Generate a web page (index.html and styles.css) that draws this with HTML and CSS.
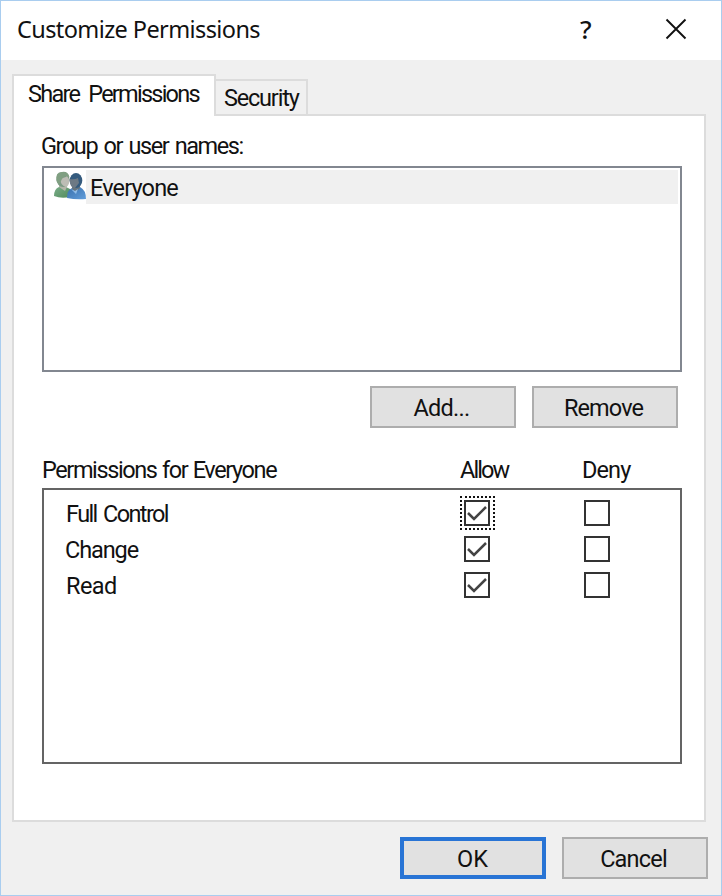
FILE: index.html
```html
<!DOCTYPE html>
<html lang="en">
<head>
<meta charset="utf-8">
<title>Customize Permissions</title>
<link rel="stylesheet" href="styles.css">
</head>
<body>
<div class="dialog">
  <header class="titlebar">
    <h1 class="title">Customize Permissions</h1>
    <span class="help">?</span>
    <svg class="close" width="22" height="22" viewBox="0 0 22 22"><path d="M1.5 1.5 20.5 20.5M20.5 1.5 1.5 20.5" fill="none" stroke="#111" stroke-width="1.9"/></svg>
  </header>
  <main class="body">
    <nav class="tabs">
      <div class="tab active"><span class="t-share">Share Permissions</span></div>
      <div class="tab"><span class="t-sec">Security</span></div>
    </nav>
    <section class="panel">
      <div class="label group-label"><span class="t-group">Group or user names:</span></div>
      <div class="users">
        <div class="user">
          <svg class="people" width="32" height="30" viewBox="0 0 32 30">
            <defs>
              <linearGradient id="g" x1="0" y1="0" x2="1" y2="1"><stop offset="0" stop-color="#7bae8b"/><stop offset="1" stop-color="#538c5c"/></linearGradient>
              <linearGradient id="b" x1="0" y1="0" x2="1" y2="1"><stop offset="0" stop-color="#386fac"/><stop offset="1" stop-color="#629edb"/></linearGradient>
            </defs>
            <path d="M0 25Q0 18 5 16L10 15 16 18V26Q7 28 0 25Z" fill="url(#g)"/>
            <path d="M5 11h8v5l-2 4-6-4Z" fill="#b3b5a8"/>
            <ellipse cx="9" cy="8.5" rx="6.5" ry="7.5" fill="#7c9984"/>
            <path d="M6 7Q11 7 13 5L15.500 9Q15 15 12 16 6 14 6 7Z" fill="#bdbdb5"/>
            <path d="M2.500 10Q1 1 8 1 14 0 15.500 6 10 4 8 8L5 14Z" fill="#809f82"/>
            <path d="M13 27Q13 19 18 17L26 16Q32 19 32 28 22 29 13 27Z" fill="url(#b)"/>
            <path d="M18 12h8v5l-4 4-4-3Z" fill="#66737c"/>
            <ellipse cx="22" cy="9.500" rx="6.300" ry="7.500" fill="#355b7e"/>
            <path d="M15.700 8Q20 9 24 7L25 12 21 17Q15.500 17 15.700 8Z" fill="#6d7984"/>
            <path d="m17 18 4 2 3-2-2 5Z" fill="#8fbce7"/>
          </svg>
          <div class="user-name"><span class="t-everyone">Everyone</span></div>
        </div>
      </div>
      <div class="list-actions">
        <button class="btn"><span class="t-add">Add...</span></button>
        <button class="btn"><span class="t-remove">Remove</span></button>
      </div>
      <div class="perm-head">
        <div class="label"><span class="t-perm">Permissions for Everyone</span></div>
        <div class="label"><span class="t-allow">Allow</span></div>
        <div class="label"><span class="t-deny">Deny</span></div>
      </div>
      <div class="perms">
        <div class="perm"><div class="name"><span class="t-full">Full Control</span></div><div class="check focus"><svg width="22" height="22" viewBox="0 0 22 22"><path d="m2 11 6 6L20 5"/></svg></div><div class="check"></div></div>
        <div class="perm"><div class="name"><span class="t-change">Change</span></div><div class="check"><svg width="22" height="22" viewBox="0 0 22 22"><path d="m2 11 6 6L20 5"/></svg></div><div class="check"></div></div>
        <div class="perm"><div class="name"><span class="t-read">Read</span></div><div class="check"><svg width="22" height="22" viewBox="0 0 22 22"><path d="m2 11 6 6L20 5"/></svg></div><div class="check"></div></div>
      </div>
    </section>
    <footer class="footer">
      <button class="btn default"><span class="t-ok">OK</span></button>
      <button class="btn"><span class="t-cancel">Cancel</span></button>
    </footer>
  </main>
</div>
</body>
</html>
```
FILE: styles.css
```css
* { box-sizing: border-box; }
body { margin: 0; font: 23.5px/28px Roboto, "Liberation Sans", sans-serif; color: #111; }
span { display: inline-block; white-space: nowrap; }
.dialog { width: 722px; height: 896px; border: 1px solid #a9cdef; background: #f0f0f0; }
.titlebar { height: 59px; background: #fff; display: flex; align-items: center; padding: 0 34px 4px 16px; }
.title { margin: 0; font: 23.5px/34px "Noto Sans", sans-serif; letter-spacing: -.6px; flex: 1; white-space: nowrap; }
.help { font: 500 26px/34px "Noto Sans", sans-serif; width: 14px; margin-right: 71px; }
.close { display: block; }
.body { padding: 14px 12px 0 11px; }
.tabs { display: flex; align-items: flex-end; height: 42px; }
.tab { height: 37px; width: 92px; border: 2px solid #dcdcdc; border-left: 0; padding: 3px 0 0 8px; }
.tab.active { height: 42px; width: 204px; border-left: 2px solid #dcdcdc; border-bottom: 0; background: #fff; padding: 4px 0 0 14px; position: relative; z-index: 1; }
.panel { width: 694px; height: 708px; margin-top: -2px; border: 2px solid #dcdcdc; background: #fff; padding: 16px 22px 0 28px; }
.label { height: 28px; }
.users { margin-top: 6px; width: 640px; height: 206px; border: 2px solid #828790; padding: 2px 2px 0 10px; }
.user { display: flex; height: 34px; }
.people { flex: none; margin-top: 1px; }
.user-name { flex: 1; background: #f0f0f0; padding: 4px 0 0 4px; }
.list-actions { display: flex; justify-content: flex-end; gap: 16px; margin-top: 14px; padding-right: 4px; }
.btn { width: 146px; height: 42px; padding: 2px 3px 0 0; border: 2px solid #adadad; background: #e1e1e1; font: inherit; color: inherit; }
.perm-head { display: grid; grid-template-columns: 418px 122px 1fr; margin-top: 28px; }
.perms { margin-top: 4px; width: 640px; height: 276px; border: 2px solid #646464; padding-top: 5px; }
.perm { display: grid; grid-template-columns: 420px 120px 26px; align-items: center; height: 36px; }
.name { padding: 1px 0 0 22px; height: 28px; }
.check { width: 26px; height: 26px; border: 2px solid #333; position: relative; }
.check svg { display: block; fill: none; stroke: #444; stroke-width: 2.5; }
.focus::after { content: ""; position: absolute; inset: -6px -7px -6px -6px; border: 2px dotted #111; }
.footer { display: flex; justify-content: flex-end; gap: 16px; margin-top: 15px; padding-right: 1px; }
.default { border: 4px solid #2874d5; padding: 2px 1px 0 0; }
.t-share { letter-spacing: -1.75px; word-spacing: 5px; }
.t-sec { letter-spacing: -1.2px; }
.t-group { letter-spacing: -1.43px; word-spacing: 2px; margin-left: -1px; }
.t-everyone { letter-spacing: -.85px; }
.t-add { letter-spacing: -.7px; }
.t-remove { letter-spacing: -.9px; }
.t-perm { letter-spacing: -1.4px; word-spacing: 1px; }
.t-allow { letter-spacing: -1.9px; }
.t-deny { letter-spacing: -.9px; }
.t-full { letter-spacing: -1.6px; word-spacing: 2px; }
.t-change { letter-spacing: -1.1px; margin-left: -1px; }
.t-read { letter-spacing: -.6px; }
.t-cancel { letter-spacing: -.8px; }
```
